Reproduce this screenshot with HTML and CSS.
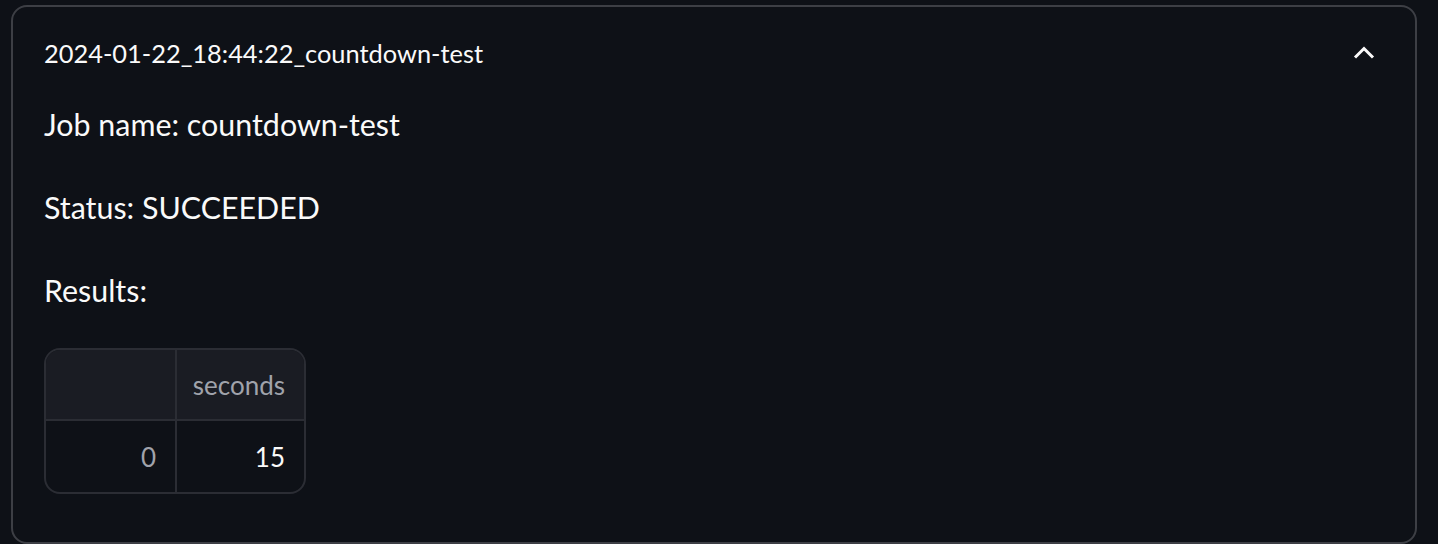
FILE: index.html
```html
<!DOCTYPE html>
<html lang="en">
<head>
<meta charset="utf-8">
<title>Job</title>
<link rel="stylesheet" href="styles.css">
</head>
<body>
<div class="expander">
  <div class="summary">
    <span class="label">2024-01-22_18:44:22_countdown-test</span>
    <svg class="chevron" width="24" height="14" viewBox="0 0 24 14"><path d="M3 11.5 L12 2.5 L21 11.5" fill="none" stroke="#fafafa" stroke-width="3"/></svg>
  </div>
  <div class="content">
    <p>Job name: countdown-test</p>
    <p>Status: SUCCEEDED</p>
    <p>Results:</p>
    <table class="df">
      <thead>
        <tr><th class="idx"></th><th>seconds</th></tr>
      </thead>
      <tbody>
        <tr><td class="idx">0</td><td>15</td></tr>
      </tbody>
    </table>
  </div>
</div>
</body>
</html>
```
FILE: styles.css
```css
html, body {
  margin: 0;
  padding: 0;
  background: #0e1117;
  color: #fafafa;
  font-family: Lato, "Liberation Sans", sans-serif;
}
body {
  padding: 5px 21px 0 11px;
  height: 544px;
  box-sizing: border-box;
  overflow: hidden;
}
.expander {
  border: 2px solid #3d3f45;
  border-radius: 16px;
  height: 539px;
  box-sizing: border-box;
}
.summary {
  display: flex;
  align-items: center;
  justify-content: space-between;
  height: 92px;
  padding: 0 39px 0 31px;
  box-sizing: border-box;
}
.label {
  font-size: 25.4px;
}
.chevron {
  display: block;
}
.content {
  padding: 0 32px 32px 31px;
}
.content p {
  margin: 0 0 32px 0;
  font-size: 30.4px;
  line-height: 51px;
}
.df {
  border-collapse: separate;
  border-spacing: 0;
  border: 2px solid #2b2d34;
  border-radius: 16px;
  overflow: hidden;
  font-size: 26px;
  margin-top: 5px;
}
.df th, .df td {
  width: 129px;
  height: 71px;
  padding: 0 19px 0 0;
  text-align: right;
  box-sizing: border-box;
}
.df th {
  background: #1a1c23;
  color: #a0a3ab;
  font-weight: normal;
  border-bottom: 2px solid #2b2d34;
}
.df th + th, .df td + td {
  border-left: 2px solid #2b2d34;
}
.df td.idx {
  color: #a0a3ab;
}
```
